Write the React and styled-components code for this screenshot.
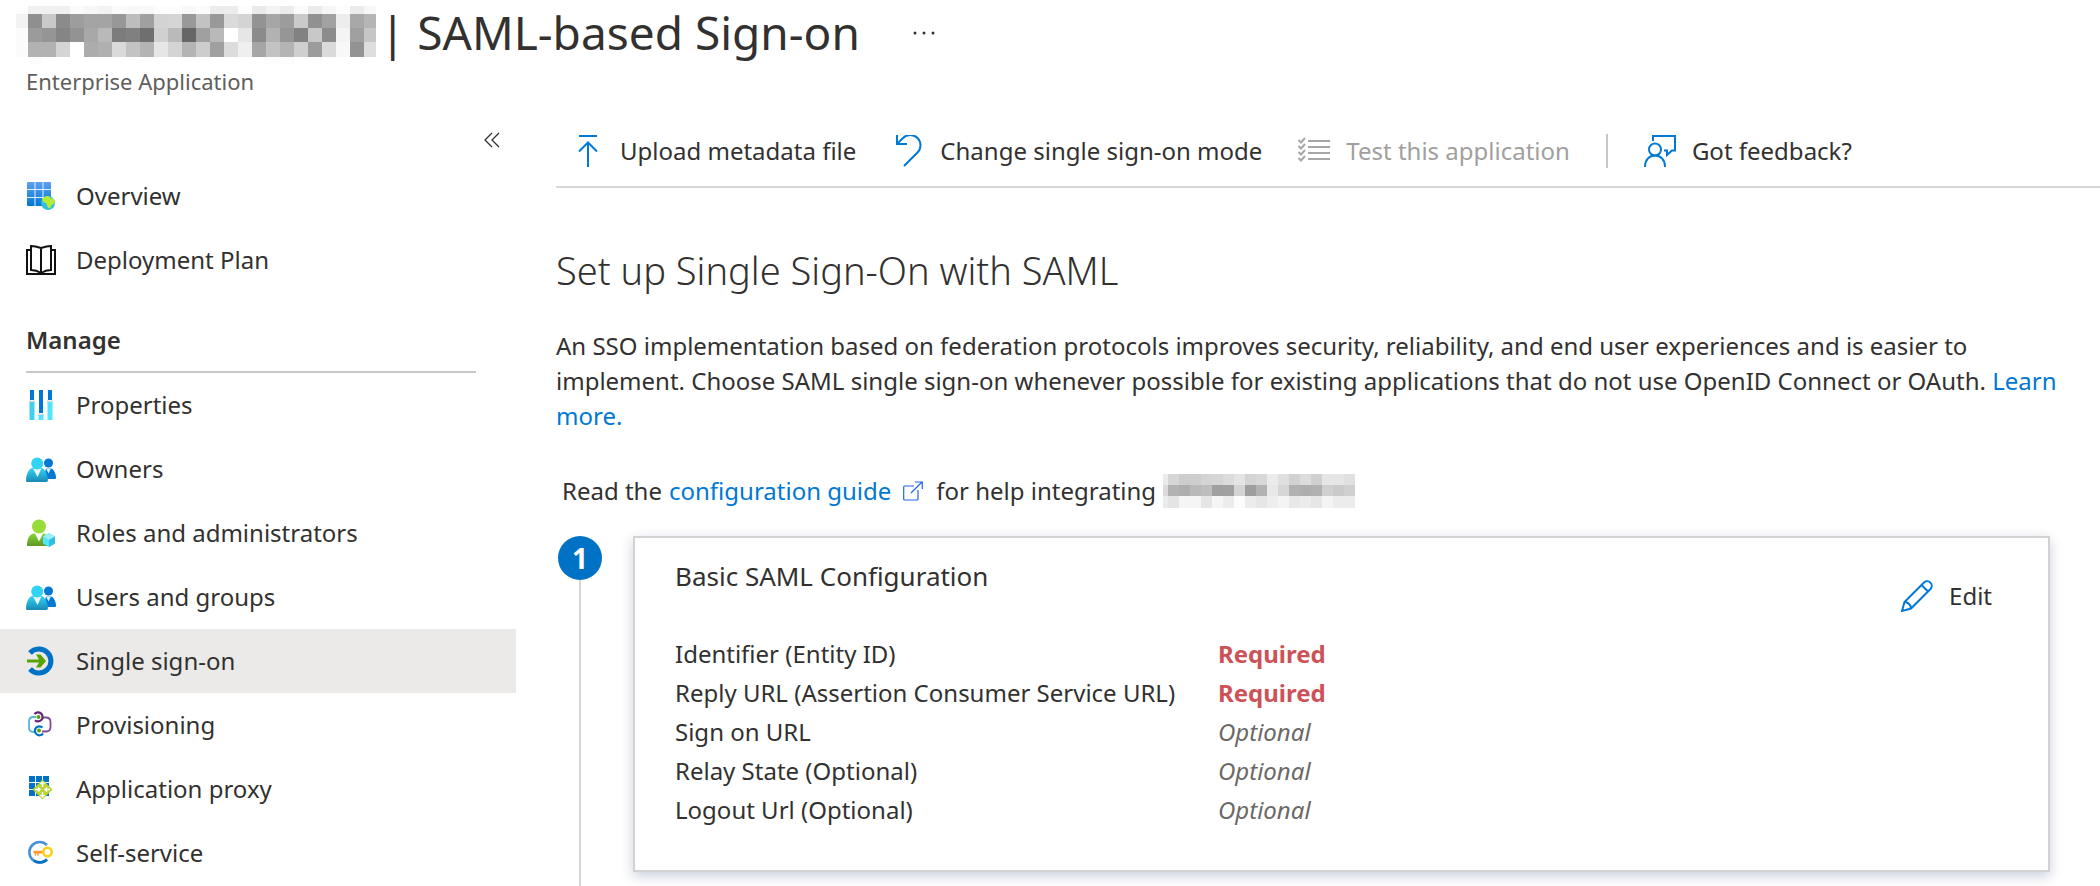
import React from "react";
import styled, { createGlobalStyle } from "styled-components";

const GlobalStyle = createGlobalStyle`
  *, *::before, *::after { box-sizing: border-box; }
  body {
    margin: 0;
    background: #fff;
    color: #323130;
    font-family: "Noto Sans", "Open Sans", sans-serif;
    font-size: 24px;
    line-height: 32px;
  }
  h1, h2, h3, p, ul { margin: 0; padding: 0; font-weight: 400; }
  ul { list-style: none; }
  a { color: #0078d4; text-decoration: none; }
  button { display: flex; font: inherit; color: inherit; background: none; border: 0; padding: 0; cursor: pointer; }
`;

const Page = styled.div`
  display: flex;
  flex-direction: column;
  min-height: 100vh;
`;

const Header = styled.header`
  height: 116px;
  padding: 6px 16px 0;
`;

const TitleRow = styled.div`
  display: flex;
  align-items: flex-start;
  height: 59px;
`;

const Title = styled.h1`
  display: flex;
  gap: 4px;
  font-size: 46px;
  line-height: 52px;
  white-space: pre;
`;

const MoreButton = styled.button`
  margin: 15px 0 0 52px;
`;

const Subtitle = styled.p`
  padding-left: 10px;
  font-size: 22px;
  color: #605e5c;
`;

const Body = styled.div`
  display: flex;
  flex: 1;
`;

const Sidebar = styled.nav`
  flex: none;
  width: 516px;
  margin-right: 40px;
`;

const CollapseRow = styled.div`
  display: flex;
  justify-content: flex-end;
  align-items: center;
  height: 48px;
  padding-right: 16px;
`;

const SectionTitle = styled.h2`
  display: flex;
  align-items: center;
  height: 81px;
  margin: 0 40px 0 26px;
  padding-top: 16px;
  border-bottom: 2px solid #c8c8c8;
  font-size: 24px;
  font-weight: 600;
`;

const NavLink = styled.a`
  display: flex;
  align-items: center;
  gap: 20px;
  height: 64px;
  padding-left: 26px;
  color: #323130;
  background: ${(p) => (p.$selected ? "#ebeae9" : "transparent")};
  svg { flex: none; }
`;

const Main = styled.main`
  display: flex;
  flex-direction: column;
  flex: 1;
  min-width: 0;
`;

const Toolbar = styled.div`
  display: flex;
  align-items: center;
  gap: 36px;
  height: 72px;
  padding-left: 16px;
  border-bottom: 2px solid #d6d6d6;
`;

const Command = styled.button`
  align-items: center;
  gap: 16px;
  white-space: nowrap;
  &:disabled { color: #a19f9d; cursor: default; }
`;

const Divider = styled.span`
  width: 2px;
  height: 34px;
  background: #c8c8c8;
`;

const Heading = styled.h2`
  margin-top: 56px;
  font-size: 38px;
  line-height: 52px;
  font-weight: 300;
`;

const Intro = styled.p`
  margin: 32px 6px 0 0;
  line-height: 35px;
`;

const Guide = styled.p`
  display: flex;
  align-items: center;
  gap: 7px;
  margin: 41px 0 0 6px;
  a { display: flex; align-items: center; gap: 12px; margin-right: 6px; }
`;

const Step = styled.section`
  display: flex;
  flex: 1;
  gap: 31px;
  margin-top: 28px;
  padding-right: 50px;
`;

const StepRail = styled.div`
  display: flex;
  flex-direction: column;
  align-items: center;
  flex: none;
  width: 44px;
  margin-left: 2px;
  &::after { content: ""; flex: 1; width: 2px; background: #d6d6d6; }
`;

const StepNumber = styled.span`
  display: flex;
  align-items: center;
  justify-content: center;
  width: 44px;
  height: 44px;
  border-radius: 50%;
  background: #0072c6;
  color: #fff;
  font-size: 28px;
  font-weight: 700;
`;

const Card = styled.div`
  flex: 1;
  margin-bottom: 14px;
  padding: 22px 56px 40px 40px;
  border: 2px solid #d2d2d2;
  box-shadow: 0 4px 12px rgba(0, 30, 80, 0.22);
`;

const CardHeader = styled.div`
  display: flex;
  justify-content: space-between;
  height: 74px;
`;

const CardTitle = styled.h3`
  font-size: 26px;
`;

const EditButton = styled(Command)`
  height: 32px;
  margin-top: 20px;
`;

const Fields = styled.table`
  border-collapse: collapse;
  th, td { height: 39px; padding: 0; text-align: left; font-weight: 400; }
  th { width: 543px; }
`;

const Value = styled.td`
  && {
    color: ${(p) => (p.$required ? "#cd5257" : "#6b6966")};
    font-weight: ${(p) => (p.$required ? 700 : 400)};
    font-style: ${(p) => (p.$required ? "normal" : "italic")};
  }
`;

const NAME_MOSAIC = [
  "fe f0 f0 f0 fb f7 f3 fb f8 f8 fd fd f8 fb ec ec fd ea f3 ec fa eb f6 fd eb f7",
  "f3 8f c9 8b 9d a4 a4 98 bd a0 d3 d5 99 c2 99 da d4 93 a6 9c ca 91 a2 ed a8 b5",
  "fb 9b 95 85 93 a8 b9 7c 80 6f d0 ba 66 a0 b9 ff e6 8b b2 96 82 c8 8c f4 a0 c6",
  "fb b2 b2 d4 ff ac b0 da c3 b4 e6 d4 b4 cd a0 dc ef a6 c3 b4 cf 9c da f8 93 de",
  "ff fc ff ff ff ff ff ff ff ff ff ff ff ff ff ff ff ff fd fd ff fd ff ff ff ff",
];
const APP_MOSAIC = [
  "eb d6 cd cd d4 d6 dc e4 d4 d8 eb df d2 dc d0 e6 e6 e0",
  "dc b2 ae b9 bd a0 a1 d4 9e b2 e8 d6 b1 ae b1 d0 ca d0",
  "eb e4 f5 f5 e5 f5 ec fc ec e6 ee f4 e8 ec e6 f4 ec ec",
];

function Mosaic({ rows, xs, ys, label }) {
  return (
    <svg width={xs[xs.length - 1]} height={ys[ys.length - 1]} role="img" aria-label={label} shapeRendering="crispEdges">
      {rows.map((row, r) =>
        row.split(" ").map((g, c) => (
          <rect key={r + "-" + c} x={xs[c]} y={ys[r]} width={xs[c + 1] - xs[c]} height={ys[r + 1] - ys[r]} fill={"#" + g + g + g} />
        ))
      )}
    </svg>
  );
}

const nameXs = [0, ...Array.from({ length: 25 }, (_, i) => 12 + i * 14), 360];
const appXs = [0, ...Array.from({ length: 18 }, (_, i) => 5 + i * 11)];

const Icon = ({ size = 30, children, ...rest }) => (
  <svg width={size} height={size} viewBox={`0 0 ${size} ${size}`} fill="none" aria-hidden="true" {...rest}>{children}</svg>
);

const OverviewIcon = () => (
  <Icon>
    <defs><linearGradient id="grid" x1="0" y1="0" x2="0" y2="1"><stop stopColor="#5ea0ef" /><stop offset="1" stopColor="#0078d4" /></linearGradient></defs>
    <rect x="1" y="1" width="24" height="24" rx="1" fill="url(#grid)" />
    <path d="M9 1v24M17 1v24M1 8.500h24M1 16.500h24" stroke="#e4f0fb" strokeWidth="1" />
    <circle cx="22" cy="22" r="7" fill="#32bedd" />
    <path d="M16 19c1-3 4-4.500 6.500-4l2 2 3.500 1c1 2 1 3 0 5l-2 .5-2 4c-2 0-3-3-3.500-5l-3-1.500z" fill="#b4ec36" />
  </Icon>
);
const BookIcon = () => (
  <Icon stroke="#111" strokeWidth="2">
    <path d="M5 5H1v24h28V5h-4M5 1v24c4 0 7 1 10 3 3-2 6-3 10-3V1c-4 0-7 1-10 2-3-1-6-2-10-2zM15 3v25" />
  </Icon>
);
const PropertiesIcon = () => (
  <Icon>
    <path d="M3 10.500h6v2H3zM12 23.500h6v2h-6zM21 10.500h6v2h-6z" fill="#dcdcdc" />
    <path d="M4 0h4v10H4zM13 0h4v23h-4zM22 0h4v10h-4z" fill="#0078d4" />
    <path d="M3.500 12h5v18h-5z" fill="#3fd0ec" /><path d="M12.500 25h5v5h-5zM21.500 12h5v18h-5z" fill="#50e6ff" />
  </Icon>
);
const PeopleIcon = () => (
  <Icon>
    <defs><linearGradient id="person" x1="0" y1="0" x2="0" y2="1"><stop stopColor="#32d4f5" /><stop offset="1" stopColor="#198ab3" /></linearGradient></defs>
    <circle cx="22.500" cy="9" r="4.500" fill="#0078d4" />
    <path d="M17 25h12c1 0 1-1 1-2-.5-5-3-8-5-8.500h-5z" fill="#0078d4" />
    <path d="M20 14.500h5l-2.500 5z" fill="#d7eefb" />
    <path d="M1 28h19c1.500 0 2-1 2-2-.5-7-3.500-11-6-12H6C3 15 .5 19 0 26c0 1 .3 2 1 2z" fill="url(#person)" />
    <path d="M7 14.500h8.500L11.500 23z" fill="#e8f6fb" />
    <circle cx="11.200" cy="9.500" r="6" fill="#32d4f5" />
  </Icon>
);
const RolesIcon = () => (
  <Icon>
    <defs><linearGradient id="admin" x1="0" y1="0" x2="0" y2="1"><stop stopColor="#86d633" /><stop offset="1" stopColor="#5e9624" /></linearGradient></defs>
    <path d="M1 28h23c0-7-3-12-6-12.500H8C4 16 1 20 1 27z" fill="url(#admin)" />
    <path d="M8.500 14.500h9L13 23.500z" fill="#fff" />
    <circle cx="13" cy="8.500" r="7" fill="#97dc37" />
    <path d="M23 15l6 3.500v7L23 29l-6-3.500v-7z" fill="#50e6ff" />
    <path d="M17 18.500L23 22l6-3.500L23 15z" fill="#9cebff" /><path d="M23 22l6-3.500v7L23 29z" fill="#32bedd" />
  </Icon>
);
const SignOnIcon = () => (
  <Icon>
    <path d="M4 7a12 12 0 1 1 0 16" stroke="#0072c6" strokeWidth="5" />
    <path d="M1 13.500h12L10 8.500h4.500l5.500 6.500-5.500 6.500H10l3-5H1z" fill="#57a300" />
  </Icon>
);
const ProvisioningIcon = () => (
  <Icon strokeWidth="1.800">
    <path d="M10 7H7.500Q3 7 3 11.500v6Q3 22 7.500 22H9" stroke="#59b4d9" />
    <path d="M17 7.500h3Q24.500 7.500 24.500 12v5Q24.500 21.500 20 21.500H16" stroke="#804998" />
    <path d="M8.500 4.200a4.500 4.500 0 1 1 .5 6" stroke="#68217a" strokeWidth="2.200" />
    <path d="M16.500 17.500a4.500 4.500 0 1 0 .5 6" stroke="#0072c6" strokeWidth="2.200" />
    <circle cx="12.500" cy="7" r="2" fill="#57a300" /><circle cx="13" cy="20.500" r="2" fill="#57a300" />
  </Icon>
);
const ProxyIcon = () => (
  <Icon>
    <path d="M3 2h20v20H3z" fill="#0072c6" />
    <path d="M9.500 2v20M16.500 2v20M3 8.500h20M3 15.500h20" stroke="#fff" />
    <path d="M16.500 5.500l10 10-10 10-10-10z" fill="#b8d432" />
    <path d="M16.500 13V8.500M14.500 10l2-2 2 2M16.500 18v4.500M14.500 21l2 2 2-2M9 15.500h5M12 13.500l2 2-2 2M24 15.500h-5M21 13.500l-2 2 2 2" stroke="#fff" strokeWidth="1.500" />
  </Icon>
);
const KeyIcon = () => (
  <Icon>
    <path d="M21 7a10.300 10.300 0 1 0 0 14.500" stroke="#4a90d9" strokeWidth="2.600" />
    <path d="M8 22.500a10.300 10.300 0 0 0 13-1" stroke="#0072c6" strokeWidth="2.600" />
    <path d="M17 12.800H7.500v2.700H8.800v2h1.300v-2h1.200v2h1.500v-2H17z" fill="#ff9a2e" />
    <circle cx="21.500" cy="14" r="4.200" stroke="#fcd116" strokeWidth="2.600" />
  </Icon>
);

const blue = { stroke: "#0078d4", strokeWidth: 2 };
const UploadIcon = () => <Icon size={32} {...blue}><path d="M7 1h18M16 32V8M7 16.500L16 7.500l9 9" /></Icon>;
const UndoIcon = () => <Icon size={32} {...blue}><path d="M5 0v9h10M5 9l6-6a10.200 10.200 0 0 1 14.500 14.500L12 31" /></Icon>;
const ChecklistIcon = () => (
  <Icon size={32} stroke="#a6a6a6" strokeWidth="2">
    {[5, 11, 17, 23].map((y) => <path key={y} d={`M10 ${y + 1}h22M.5 ${y}l2.500 2.500L7 ${y - 2}`} />)}
  </Icon>
);
const FeedbackIcon = () => (
  <Icon size={32} {...blue}>
    <circle cx="11" cy="14.500" r="6" /><path d="M1 32c0-7 4-11.500 10-11.500S21 25 21 32M9 6V1h22v14.500h-3l-5 4.500v-4.500h-3" />
  </Icon>
);
const PencilIcon = () => (
  <Icon size={32} {...blue}>
    <path d="M1 31l2.500-9L23 2.500a4.600 4.600 0 0 1 6.500 6.500L10 28.500zM3.500 22c3.500 0 6.500 3 6.500 6.500M20.500 5l6.500 6.500" />
  </Icon>
);
const ExternalIcon = () => (
  <svg width="20" height="20" viewBox="0 0 20 20" fill="none" stroke="#2266e3" strokeWidth="1.200" aria-hidden="true">
    <path d="M11 5H1.500Q.7 5 .7 6v12q0 1 1 1H14q1 0 1-1V9M8 12L19 1M12 1h7.300v7" />
  </svg>
);
const CollapseIcon = () => (
  <svg width="16" height="16" viewBox="0 0 16 16" fill="none" stroke="#323130" strokeWidth="1.300" aria-hidden="true">
    <path d="M8 1L1 8l7 7M15 1L8 8l7 7" />
  </svg>
);
const MoreIcon = () => (
  <svg width="24" height="24" viewBox="0 0 24 24" fill="#323130" aria-hidden="true">
    <circle cx="3" cy="12" r="1.500" /><circle cx="12" cy="12" r="1.500" /><circle cx="21" cy="12" r="1.500" />
  </svg>
);

const topItems = [["Overview", OverviewIcon], ["Deployment Plan", BookIcon]];
const manageItems = [
  ["Properties", PropertiesIcon],
  ["Owners", PeopleIcon],
  ["Roles and administrators", RolesIcon],
  ["Users and groups", PeopleIcon],
  ["Single sign-on", SignOnIcon],
  ["Provisioning", ProvisioningIcon],
  ["Application proxy", ProxyIcon],
  ["Self-service", KeyIcon],
];
const fields = [
  ["Identifier (Entity ID)", true],
  ["Reply URL (Assertion Consumer Service URL)", true],
  ["Sign on URL", false],
  ["Relay State (Optional)", false],
  ["Logout Url (Optional)", false],
];

const NavList = ({ items }) => (
  <ul>
    {items.map(([label, Glyph]) => {
      const selected = label === "Single sign-on";
      return (
        <li key={label}>
          <NavLink href="#" $selected={selected} aria-current={selected ? "page" : undefined}><Glyph />{label}</NavLink>
        </li>
      );
    })}
  </ul>
);

export default function App() {
  return (
    <Page>
      <GlobalStyle />
      <Header>
        <TitleRow>
          <Title>
            <Mosaic rows={NAME_MOSAIC} xs={nameXs} ys={[0, 8, 22, 36, 51, 58]} label="Application name hidden" />
            <span>| SAML-based Sign-on</span>
          </Title>
          <MoreButton aria-label="More"><MoreIcon /></MoreButton>
        </TitleRow>
        <Subtitle>Enterprise Application</Subtitle>
      </Header>
      <Body>
        <Sidebar>
          <CollapseRow><button aria-label="Collapse menu"><CollapseIcon /></button></CollapseRow>
          <NavList items={topItems} />
          <SectionTitle>Manage</SectionTitle>
          <NavList items={manageItems} />
        </Sidebar>
        <Main>
          <Toolbar>
            <Command><UploadIcon />Upload metadata file</Command>
            <Command><UndoIcon />Change single sign-on mode</Command>
            <Command disabled><ChecklistIcon />Test this application</Command>
            <Divider />
            <Command><FeedbackIcon />Got feedback?</Command>
          </Toolbar>
          <Heading>Set up Single Sign-On with SAML</Heading>
          <Intro>
            An SSO implementation based on federation protocols improves security, reliability, and end user experiences and is easier to
            implement. Choose SAML single sign-on whenever possible for existing applications that do not use OpenID Connect or
            OAuth. <a href="#">Learn more.</a>
          </Intro>
          <Guide>
            <span>Read the</span>
            <a href="#">configuration guide <ExternalIcon /></a>
            <span>for help integrating</span>
            <Mosaic rows={APP_MOSAIC} xs={appXs} ys={[0, 11, 22, 34]} label="Application name hidden" />
          </Guide>
          <Step>
            <StepRail><StepNumber>1</StepNumber></StepRail>
            <Card>
              <CardHeader>
                <CardTitle>Basic SAML Configuration</CardTitle>
                <EditButton><PencilIcon />Edit</EditButton>
              </CardHeader>
              <Fields>
                <tbody>
                  {fields.map(([name, required]) => (
                    <tr key={name}>
                      <th scope="row">{name}</th>
                      <Value $required={required}>{required ? "Required" : "Optional"}</Value>
                    </tr>
                  ))}
                </tbody>
              </Fields>
            </Card>
          </Step>
        </Main>
      </Body>
    </Page>
  );
}
